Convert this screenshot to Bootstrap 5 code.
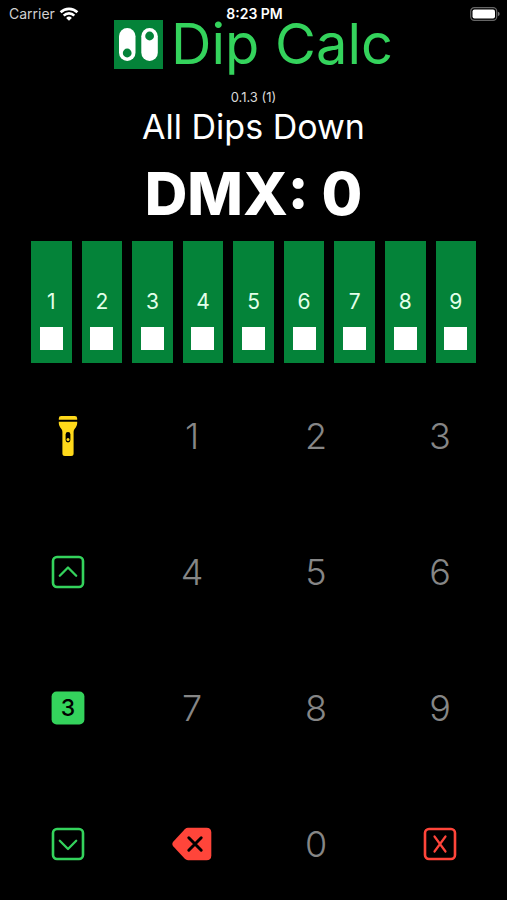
<!DOCTYPE html>
<html lang="en">
<head>
<meta charset="utf-8">
<meta name="viewport" content="width=device-width, initial-scale=1">
<title>Dip Calc</title>
<link href="https://cdn.jsdelivr.net/npm/bootstrap@5.3.0/dist/css/bootstrap.min.css" rel="stylesheet">
<style>
body { background: #000; color: #fff; font-family: Inter, "Liberation Sans", sans-serif; }
.status-bar { height: 20px; padding: 7px 7px 0 9px; font-size: 14px; line-height: 20px; }
.status-side { flex: 1 1 0; }
.status-side svg, .app-head svg, .key svg { display: block; }
.status-label { color: #d0d0d0; }
.app-head { gap: 8px; height: 49px; }
.app-title { color: #34d35c; font-size: 56px; line-height: 49px; font-weight: 400; }
.version { margin-top: 20px; font-size: 13px; line-height: 16px; color: #d8d8d8; }
.dip-text { font-size: 34px; line-height: 44px; font-weight: 400; }
.dmx { margin-top: 9px; font-size: 59px; line-height: 72px; font-weight: 800; }
.dips { gap: 10px; padding: 0 31px; margin-top: 11px; }
.dip { flex: 1 1 0; height: 122px; padding: 0 0 13px; gap: 13px; border: 0; background: #048339; color: #e2ffe9; font-size: 21px; line-height: 24px; }
.dip-knob { width: 23px; height: 23px; background: #fff; }
.keypad { display: grid; grid-template-columns: repeat(4, 1fr); row-gap: 36px; padding: 0 5px 0 6px; margin-top: 23px; }
.key { height: 100px; padding: 0; border: 0; background: none; color: #868686; font-size: 36px; line-height: 44px; font-weight: 300; }
.key text { font-family: Inter, "Liberation Sans", sans-serif; }
</style>
</head>
<body>
<header class="status-bar d-flex align-items-center">
  <div class="status-side d-flex align-items-center gap-1">
    <span class="status-label">Carrier</span>
    <svg width="20" height="14" viewBox="0 0 20 14" fill="none" stroke="#fff" stroke-width="2.6" aria-hidden="true">
      <path d="M1.6 5.3a12 12 0 0 1 16.8 0M4.7 8.6a7.5 7.5 0 0 1 10.6 0"/>
      <path d="M10 13.8 7.1 10.9a4.2 4.2 0 0 1 5.8 0z" fill="#fff" stroke="none"/>
    </svg>
  </div>
  <span class="fw-semibold">8:23 PM</span>
  <div class="status-side d-flex justify-content-end">
    <svg width="31" height="14" viewBox="0 0 31 14" aria-hidden="true">
      <rect x="1.700" y=".7" width="26" height="12.6" rx="3.6" fill="none" stroke="#666" stroke-width="1.2"/>
      <rect x="3.500" y="2.5" width="22.5" height="9" rx="2" fill="#fff"/>
      <path d="M28.900 4.8q1.800 .6 1.800 2.2t-1.800 2.2z" fill="#777"/>
    </svg>
  </div>
</header>
<main>
  <div class="app-head d-flex justify-content-center align-items-center">
    <svg width="49" height="49" viewBox="0 0 49 49" aria-hidden="true">
      <path d="M0 0h49v49H0z" fill="#048339"/>
      <rect x="5" y="8" width="16.5" height="33" rx="8.25" fill="#fff"/>
      <rect x="27.3" y="8" width="16.5" height="33" rx="8.25" fill="#fff"/>
      <circle cx="13.2" cy="33" r="4.4" fill="#048339"/>
      <circle cx="35.6" cy="16" r="4.4" fill="#048339"/>
    </svg>
    <h1 class="app-title m-0">Dip Calc</h1>
  </div>
  <div class="version text-center">0.1.3 (1)</div>
  <div class="dip-text text-center">All Dips Down</div>
  <div class="dmx text-center">DMX: 0</div>

  <div class="dips d-flex">
    <button type="button" class="dip d-flex flex-column align-items-center justify-content-end">1<span class="dip-knob"></span></button>
    <button type="button" class="dip d-flex flex-column align-items-center justify-content-end">2<span class="dip-knob"></span></button>
    <button type="button" class="dip d-flex flex-column align-items-center justify-content-end">3<span class="dip-knob"></span></button>
    <button type="button" class="dip d-flex flex-column align-items-center justify-content-end">4<span class="dip-knob"></span></button>
    <button type="button" class="dip d-flex flex-column align-items-center justify-content-end">5<span class="dip-knob"></span></button>
    <button type="button" class="dip d-flex flex-column align-items-center justify-content-end">6<span class="dip-knob"></span></button>
    <button type="button" class="dip d-flex flex-column align-items-center justify-content-end">7<span class="dip-knob"></span></button>
    <button type="button" class="dip d-flex flex-column align-items-center justify-content-end">8<span class="dip-knob"></span></button>
    <button type="button" class="dip d-flex flex-column align-items-center justify-content-end">9<span class="dip-knob"></span></button>
  </div>

  <div class="keypad">
    <button type="button" class="key d-flex align-items-center justify-content-center" aria-label="Flashlight">
      <svg width="20" height="42" viewBox="0 0 20 42" fill="#ffd91a">
        <path d="M.8 4.7V3.4Q.8 1 3.2 1h13.6q2.400 0 2.400 2.400v1.300zM.8 6.800h18.400v1.400q0 2.200-1.300 4l-1.500 2.100q-.8 1.200-.8 2.700v21.500q0 2.500-2.500 2.500H6.900q-2.500 0-2.500-2.500V17q0-1.500-.8-2.700l-1.500-2.100Q.8 10.400.8 8.200z"/>
        <rect x="7.600" y="17" width="4.800" height="10.500" rx="2.400" fill="#000"/>
        <circle cx="10" cy="24.600" r="1.500"/>
      </svg>
    </button>
    <button type="button" class="key">1</button>
    <button type="button" class="key">2</button>
    <button type="button" class="key">3</button>

    <button type="button" class="key d-flex align-items-center justify-content-center" aria-label="Up">
      <svg width="34" height="34" viewBox="0 0 34 34" fill="none" stroke="#34d35c" stroke-linecap="round" stroke-linejoin="round">
        <rect x="2" y="2" width="30" height="30" rx="4" stroke-width="2.600"/>
        <path d="M8.800 20.800 17 12.500l8.200 8.300" stroke-width="2.300"/>
      </svg>
    </button>
    <button type="button" class="key">4</button>
    <button type="button" class="key">5</button>
    <button type="button" class="key">6</button>

    <button type="button" class="key d-flex align-items-center justify-content-center" aria-label="Step 3">
      <svg width="34" height="34" viewBox="0 0 34 34">
        <rect x=".6" y=".6" width="32.800" height="32.800" rx="5" fill="#34d35c"/>
        <text x="17" y="25" text-anchor="middle" font-size="23" font-weight="500" fill="#000">3</text>
      </svg>
    </button>
    <button type="button" class="key">7</button>
    <button type="button" class="key">8</button>
    <button type="button" class="key">9</button>

    <button type="button" class="key d-flex align-items-center justify-content-center" aria-label="Down">
      <svg width="34" height="34" viewBox="0 0 34 34" fill="none" stroke="#34d35c" stroke-linecap="round" stroke-linejoin="round">
        <rect x="2" y="2" width="30" height="30" rx="4" stroke-width="2.600"/>
        <path d="M8.800 13.800 17 22l8.200-8.200" stroke-width="2.300"/>
      </svg>
    </button>
    <button type="button" class="key d-flex align-items-center justify-content-center" aria-label="Delete">
      <svg width="40" height="34" viewBox="0 0 40 34">
        <path d="M16 .8h18.500q4.800 0 4.800 4.800v22.800q0 4.800-4.800 4.800H16q-1.800 0-3.200-1.400L1.400 19.600Q-.8 17 1.400 14.400L12.800 2.200Q14.200.8 16 .8z" fill="#ff453a"/>
        <path d="m16.800 10.800 12.400 12.400m0-12.400L16.800 23.200" stroke="#000" stroke-width="3" stroke-linecap="round"/>
      </svg>
    </button>
    <button type="button" class="key">0</button>
    <button type="button" class="key d-flex align-items-center justify-content-center" aria-label="Clear">
      <svg width="34" height="34" viewBox="0 0 34 34" fill="none" stroke="#ff453a" stroke-linecap="round">
        <rect x="2" y="2" width="30" height="30" rx="4" stroke-width="2.600"/>
        <path d="m11.500 9.500 11 15m0-15-11 15" stroke-width="2.200"/>
      </svg>
    </button>
  </div>
</main>
<script src="https://cdn.jsdelivr.net/npm/bootstrap@5.3.0/dist/js/bootstrap.bundle.min.js"></script>
</body>
</html>
